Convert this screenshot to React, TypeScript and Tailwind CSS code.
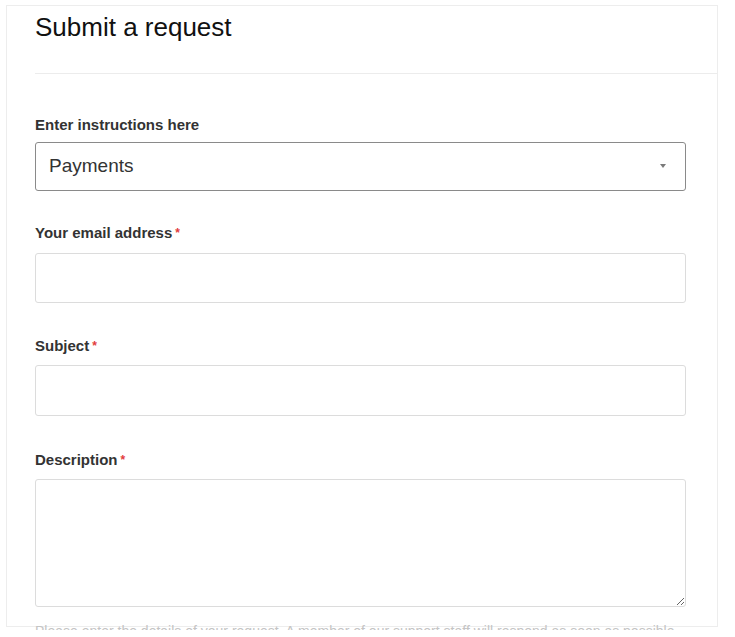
import React from "react";

const labelCls = "block text-[15px] leading-[20px] font-bold text-[#333]";
const inputCls =
  "block w-full h-[50px] rounded-[3px] border border-[#dcdcdc] bg-white px-3 text-[16px] text-[#333] outline-none";

function Required() {
  return <span className="relative top-[-1px] ml-[3px] text-[12px] leading-none text-[#e23c3c]">*</span>;
}

export default function App() {
  return (
    <div className="h-[630px] overflow-hidden bg-white font-['Liberation_Sans',Arial,sans-serif]">
      <div className="ml-[6px] mt-[5px] h-[622px] w-[712px] border border-[#ededed] bg-white">
        {/* Header */}
        <div className="ml-[28px] mt-[6px] border-b border-[#ececec] pb-[30px]">
          <h1 className="text-[26px] leading-[31px] font-normal text-[#111]">Submit a request</h1>
        </div>

        {/* Form */}
        <form className="pl-[28px] pr-[31px]">
          <label className={`${labelCls} mt-[41px]`}>Enter instructions here</label>
          <div className="mt-[7px] flex h-[49px] items-center justify-between rounded-[3px] border border-[#8a8a8a] pl-[13px] pr-[19px]">
            <span className="text-[19px] text-[#333]">Payments</span>
            <svg width="6" height="4" viewBox="0 0 6 4" className="mt-[-2px]">
              <polygon points="0,0 6,0 3,4" fill="#7a7a7a" />
            </svg>
          </div>

          <label className={`${labelCls} mt-[32px]`}>
            Your email address
            <Required />
          </label>
          <input className={`${inputCls} mt-[10px]`} />

          <label className={`${labelCls} mt-[33px]`}>
            Subject
            <Required />
          </label>
          <input className={`${inputCls} mt-[9px] h-[51px]`} />

          <label className={`${labelCls} mt-[34px]`}>
            Description
            <Required />
          </label>
          <textarea className="mt-[9px] block h-[128px] w-full rounded-[3px] border border-[#dcdcdc] bg-white px-3 py-2 text-[16px] outline-none" />

          <p className="mt-[14px] whitespace-nowrap text-[14px] leading-[20px] text-[#c4c4c4]">
            Please enter the details of your request. A member of our support staff will respond as soon as possible.
          </p>
        </form>
      </div>
    </div>
  );
}
